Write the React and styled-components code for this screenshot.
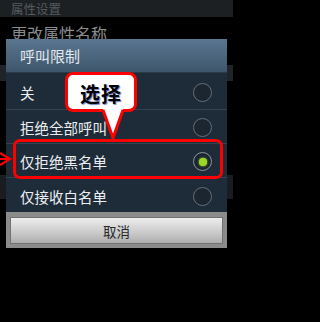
import { createGlobalStyle, styled } from 'styled-components';

const GlobalStyle = createGlobalStyle`
    html, body {
        margin: 0;
        padding: 0;
        background: #000;
    }
    body {
        font-family: "Noto Sans CJK SC", "Noto Sans", sans-serif;
    }
`;

const options = [
    { label: '关', height: 37 },
    { label: '拒绝全部呼叫', height: 34 },
    { label: '仅拒绝黑名单', height: 34, checked: true },
    { label: '仅接收白名单', height: 34 },
];

export default function App() {
    return (
        <>
            <GlobalStyle />
            <Screen>
                {/* 뒤쪽 설정 화면 (어둡게 보이는 부분) */}
                <TopBar>属性设置</TopBar>
                <PageItem>更改属性名称</PageItem>
                <Band $height={16} $color="#1f2428" />
                <Spacer $height={94} />
                <Band $height={24} $color="#1a1d20" />

                <Dialog>
                    <DialogTitle>呼叫限制</DialogTitle>
                    <OptionList>
                        {options.map((opt) => (
                            <OptionRow key={opt.label} $height={opt.height}>
                                <OptionLabel>{opt.label}</OptionLabel>
                                <Radio $checked={opt.checked}>
                                    {opt.checked && <RadioDot />}
                                </Radio>
                            </OptionRow>
                        ))}
                    </OptionList>
                    <ButtonPanel>
                        <CancelButton>取消</CancelButton>
                    </ButtonPanel>
                </Dialog>

                {/* 설명용 표시 */}
                <Highlight />
                <SideArrow width="14" height="16" viewBox="0 0 14 16">
                    <polyline
                        points="1,2 11,8 1,14"
                        fill="none"
                        stroke="#ff0000"
                        strokeWidth="2.2"
                        strokeLinejoin="miter"
                    />
                    <line x1="0" y1="8" x2="10" y2="8" stroke="#ff0000" strokeWidth="2" />
                </SideArrow>
                <Callout>
                    <CalloutText>选择</CalloutText>
                </Callout>
                <CalloutTail width="26" height="32" viewBox="0 0 26 32">
                    <polygon points="3,0 23,0 13,29" fill="#fff" />
                    <polyline
                        points="3,1 13,29 23,1"
                        fill="none"
                        stroke="#ff0000"
                        strokeWidth="3"
                        strokeLinejoin="miter"
                    />
                </CalloutTail>
            </Screen>
        </>
    );
}

const Screen = styled.div`
    position: relative;
    width: 233px;
    height: 322px;
    overflow: hidden;
    background: #000;
`;

const TopBar = styled.div`
    height: 17px;
    padding-left: 11px;
    background: #1d2023;
    color: #545a5f;
    font-size: 12.5px;
    line-height: 18px;
`;

const PageItem = styled.div`
    height: 48px;
    padding-left: 11px;
    color: #8a8c8e;
    font-size: 16px;
    line-height: 33px;
`;

const Band = styled.div`
    height: ${(p) => p.$height}px;
    background: ${(p) => p.$color};
`;

const Spacer = styled.div`
    height: ${(p) => p.$height}px;
`;

const Dialog = styled.div`
    position: absolute;
    top: 39px;
    left: 6px;
    width: 221px;
    display: flex;
    flex-direction: column;
    background: #1e2b38;
`;

const DialogTitle = styled.div`
    height: 34px;
    padding-left: 14px;
    display: flex;
    align-items: center;
    box-sizing: border-box;
    background: linear-gradient(#5a7690, #3d566b);
    border-bottom: 1px solid #2a3b4a;
    color: #e2e8ee;
    font-size: 15px;
`;

const OptionList = styled.div`
    display: flex;
    flex-direction: column;
`;

const OptionRow = styled.div`
    height: ${(p) => p.$height}px;
    box-sizing: border-box;
    display: flex;
    align-items: center;
    justify-content: space-between;
    padding: 2px 14px 0 14px;
    border-bottom: 1px solid #34434f;
    &:last-child {
        border-bottom: none;
    }
`;

const OptionLabel = styled.span`
    color: #eceff2;
    font-size: 14.5px;
`;

const Radio = styled.span`
    width: 19px;
    height: 19px;
    box-sizing: border-box;
    border-radius: 50%;
    border: 1.5px solid ${(p) => (p.$checked ? '#8c969e' : '#646e78')};
    background: #1b2630;
    display: flex;
    align-items: center;
    justify-content: center;
    margin-right: 1px;
`;

const RadioDot = styled.span`
    width: 8px;
    height: 8px;
    border-radius: 50%;
    background: #9ad824;
    box-shadow: 0 0 2px #b8f040;
`;

const ButtonPanel = styled.div`
    padding: 5px 4px 4px;
    background: #8b8b8b;
`;

const CancelButton = styled.div`
    height: 27px;
    box-sizing: border-box;
    display: flex;
    align-items: center;
    justify-content: center;
    border: 1px solid #727272;
    background: linear-gradient(#ededed, #c9c9c9 60%, #adadad);
    color: #262626;
    font-size: 13.5px;
`;

const Highlight = styled.div`
    position: absolute;
    top: 139px;
    left: 13px;
    width: 210px;
    height: 40px;
    box-sizing: border-box;
    border: 3px solid #ff0000;
    border-radius: 7px;
`;

const SideArrow = styled.svg`
    position: absolute;
    top: 151px;
    left: -1px;
`;

const Callout = styled.div`
    position: absolute;
    top: 72px;
    left: 65px;
    width: 72px;
    height: 40px;
    box-sizing: border-box;
    border: 3px solid #ff0000;
    border-radius: 8px;
    background: #fff;
    display: flex;
    align-items: center;
    justify-content: center;
`;

const CalloutText = styled.span`
    margin-top: 3px;
    color: #000;
    font-family: "Noto Sans CJK SC", serif;
    font-weight: 700;
    font-size: 20px;
    letter-spacing: 1px;
    text-shadow: 1px 1px 1px #6a86c8;
`;

const CalloutTail = styled.svg`
    position: absolute;
    top: 109px;
    left: 100px;
`;
